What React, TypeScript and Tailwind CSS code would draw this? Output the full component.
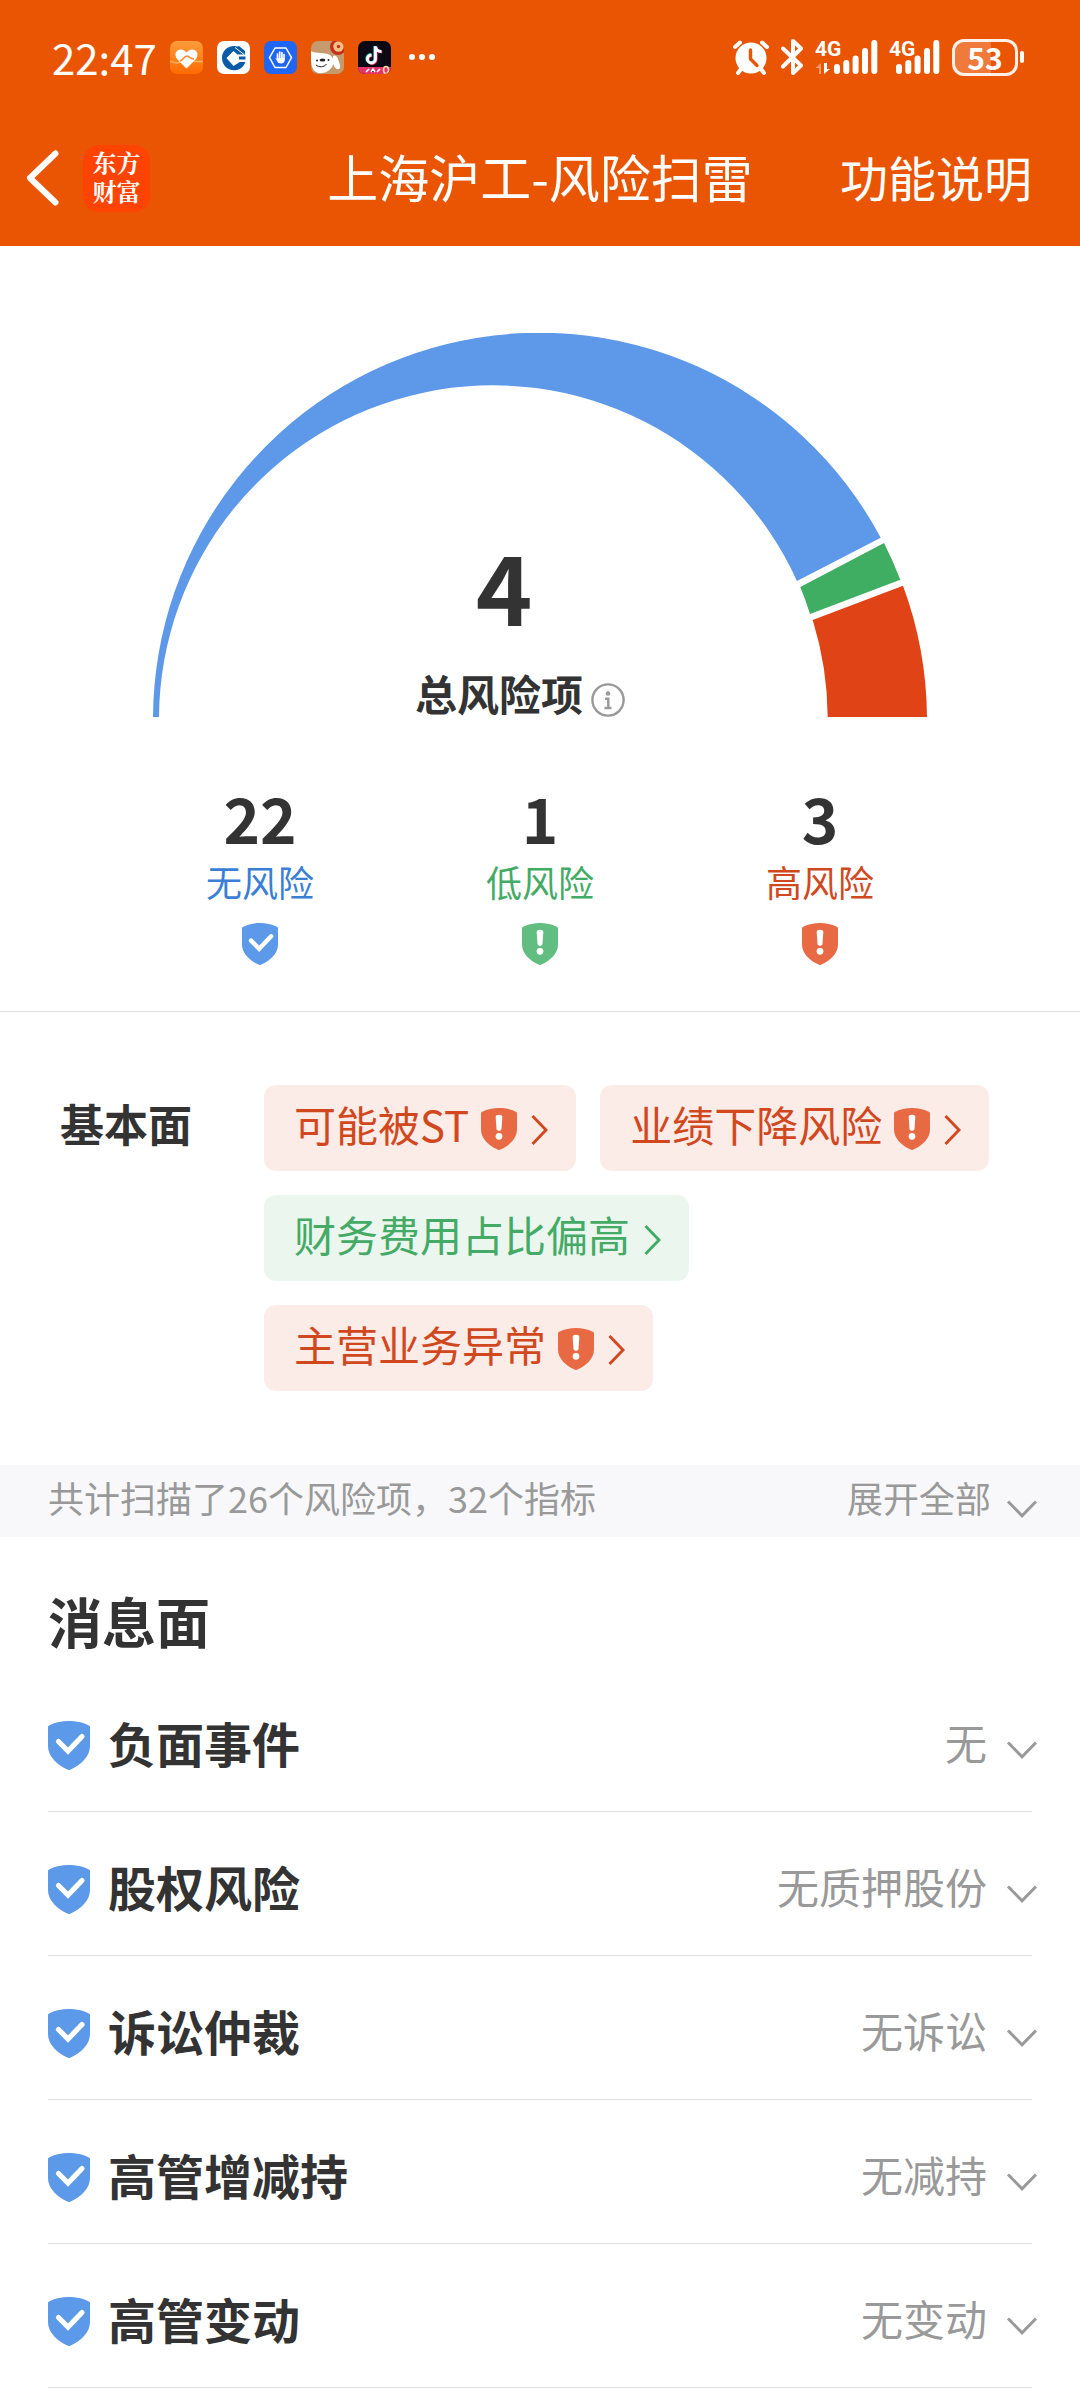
import React, { useState } from 'react';

type Level = 'none' | 'low' | 'high';

const FONT = "font-['Noto_Sans_CJK_SC','Noto_Sans',sans-serif]";

const SHIELD_FILL: Record<Level, string> = {
  none: 'fill-[#5c99e8]',
  low: 'fill-[#62bd80]',
  high: 'fill-[#e86a45]',
};

const Shield: React.FC<{ level: Level; className?: string }> = ({ level, className = '' }) => (
  <svg viewBox="0 0 42 49" className={`shrink-0 ${className}`} aria-hidden="true">
    <path
      className={SHIELD_FILL[level]}
      d="M1.500 4.300C13-1.300 29-1.300 40.500 4.300 41.700 4.900 42 5.200 42 6.500V25c0 10-8.500 18.500-18.800 23.200-1.600.9-2.800.9-4.400 0C8.500 43.500 0 35 0 25V6.500c0-1.300.3-1.600 1.500-2.200Z"
    />
    {level === 'none' ? (
      <path
        d="M10.500 20.500 20 30 34 15.500"
        fill="none"
        stroke="#fff"
        strokeWidth="5.200"
        strokeLinecap="round"
        strokeLinejoin="miter"
      />
    ) : (
      <g fill="#fff">
        <path d="M17.100 10.500c0-3.400 7.800-3.400 7.800 0l-1 14c-.2 2.800-5.600 2.800-5.800 0Z" />
        <circle cx="21" cy="33" r="3.900" />
      </g>
    )}
  </svg>
);

const ChevronRight: React.FC = () => (
  <svg viewBox="0 0 17 30" className="h-[30px] w-[17px] shrink-0" fill="none" aria-hidden="true">
    <path d="M1.500 1 15 15 1.500 29" stroke="currentColor" strokeWidth="2.900" />
  </svg>
);

const ChevronDown: React.FC<{ className?: string }> = ({ className = '' }) => (
  <svg viewBox="0 0 30 18" className={`h-[18px] w-[30px] shrink-0 ${className}`} fill="none" aria-hidden="true">
    <path d="M1 1.500 15 15.800 29 1.500" stroke="currentColor" strokeWidth="3" />
  </svg>
);

/* ---------- Status bar ---------- */

const AppIcons: React.FC = () => (
  <div className="ml-[13px] flex items-center gap-3.5" aria-hidden="true">
    <svg viewBox="0 0 33 33" className="size-[33px]">
      <defs>
        <linearGradient id="health-bg" x1="0" y1="0" x2="0" y2="1">
          <stop offset="0" stopColor="#ff9c3c" />
          <stop offset="1" stopColor="#ff6a00" />
        </linearGradient>
      </defs>
      <rect width="33" height="33" rx="7" fill="url(#health-bg)" />
      <path d="M0 20.500c4 0 4 1.500 7 1.500 4 0 5-5 9.500-5s5 3.500 8 3.500H33" stroke="#ffb45e" strokeWidth="1.500" fill="none" />
      <path d="M16.500 27.500 7.500 18.500C3.500 14 6 8.500 10.500 8.500c3 0 5 1.500 6 3 1-1.500 3-3 6-3 4.500 0 7 5.500 3 10Z" fill="#fff" />
      <path d="M10 20c3-1 4-5 7-5 2 0 3 3 7 3" stroke="#ff8a24" strokeWidth="1.600" fill="none" />
    </svg>
    <svg viewBox="0 0 33 33" className="size-[33px]">
      <rect width="33" height="33" rx="7" fill="#fff" />
      <path
        d="M18 5C10.500 4.500 5 10 5 17s5.500 12.300 12 12.300c5.500 0 10-3.500 11.300-8.300h-5.500L16.500 25 9.500 17l7-7 4 3.500h8L21 6Z"
        fill="#0b5ba8"
      />
      <path d="m16.500 10.800 6.200 6.200-6.200 6.500-6.200-6.500Z" fill="#fff" />
      <path d="m22 5 6 5v3L19 6Z" fill="#0b5ba8" />
      <path d="m18 6.500 9 7" stroke="#fff" strokeWidth="1" />
      <path d="M22 17h6.500" stroke="#0b5ba8" strokeWidth="3" />
    </svg>
    <svg viewBox="0 0 33 33" className="size-[33px]">
      <rect width="33" height="33" rx="7" fill="#1f66f5" />
      <path d="M11 7h11l5.500 9.700L22 26.500H11L5.500 16.700Z" fill="none" stroke="#fff" strokeWidth="1.500" strokeLinejoin="round" />
      <path
        d="M13.500 18v-5M15.700 17v-6M17.900 17v-5.500M20 18v-4.500"
        stroke="#fff"
        strokeWidth="1.700"
        strokeLinecap="round"
      />
      <path d="M11 16.500l3 5c.8 1.200 4.800 1.200 5.800 0 .8-1 1-2.500 1-4.500h-7.500v1.500Z" fill="#fff" />
    </svg>
    <svg viewBox="0 0 33 33" className="size-[33px]">
      <defs>
        <clipPath id="dog-clip">
          <rect width="33" height="33" rx="7" />
        </clipPath>
      </defs>
      <g clipPath="url(#dog-clip)">
        <rect width="33" height="33" fill="#c79a6e" />
        <circle cx="27" cy="6" r="8" fill="#c5301e" />
        <circle cx="27.500" cy="5.500" r="5.200" fill="#f5c183" />
        <circle cx="27.500" cy="5.500" r="1.700" fill="#c5301e" />
        <path d="M0 10c5 3 14 1 19 4 3 2 5 7 2 12-3 5-11 8-16 5-4-2-5-9-5-13Z" fill="#fff" />
        <path d="M22 15c3-2 5 2 6 6 1 3 2 6 0 7-3 1-6-3-6-7Z" fill="#fff" />
        <ellipse cx="11.500" cy="19" rx="2.900" ry="1.500" fill="#222" />
        <circle cx="6" cy="19.500" r="1" fill="#222" />
        <circle cx="17.500" cy="19" r="1" fill="#222" />
        <path d="M5 24c3 2.500 8 2.500 10.500-1" stroke="#222" strokeWidth="1" fill="none" />
        <path d="M0 31c3 .5 5 1.500 6 2H0Z" fill="#d05b3c" />
      </g>
    </svg>
    <svg viewBox="0 0 33 33" className="size-[33px]">
      <defs>
        <clipPath id="note-clip">
          <rect width="33" height="33" rx="7" />
        </clipPath>
      </defs>
      <g clipPath="url(#note-clip)">
        <rect width="33" height="33" fill="#0b0914" />
        <g fill="none" strokeWidth="2.800">
          <path d="M16.800 5v12.500a4 4 0 1 1-4-4M16.800 5c.5 3 2.700 5 6 5.200" stroke="#27e8e8" />
          <path d="M18.200 6v12.500a4 4 0 1 1-4-4M18.200 6c.5 3 2.700 5 6 5.200" stroke="#fb2b5b" />
          <path d="M17.500 5.500V18a4 4 0 1 1-4-4M17.500 5.500c.5 3 2.700 5 6 5.200" stroke="#fff" />
        </g>
        <path d="M0 26h33v7H0Z" fill="#e8326c" />
        <path d="M8 31l3-3M13 31l2-3 2 3M19 31l3-3" stroke="#fff" strokeWidth="1.600" />
        <ellipse cx="28" cy="29" rx="2.500" ry="3.500" fill="none" stroke="#ffd7a8" strokeWidth="1.600" />
      </g>
    </svg>
  </div>
);

const Signal: React.FC<{ data?: boolean }> = ({ data = false }) => (
  <svg
    viewBox={data ? '0 -8 63 52' : '0 -8 51 52'}
    className={data ? 'h-[52px] w-[63px]' : 'h-[52px] w-[51px]'}
    aria-label="4G"
  >
    <text x="0" y="17" fontSize="21" fontWeight="700" fill="#fff" fontFamily="Roboto, sans-serif">
      4G
    </text>
    {data && (
      <g>
        <path d="M4 35v-6H.500L6 24v11Z" fill="#f79a6a" />
        <path d="M9 24v11l6-5h-3v-6Z" fill="#fff" />
      </g>
    )}
    <g transform={data ? 'translate(19 0)' : 'translate(7 0)'} fill="#fff">
      <rect x="0" y="25" width="6" height="10" rx="3" />
      <rect x="9.300" y="21" width="6" height="14" rx="3" />
      <rect x="18.600" y="16.500" width="6" height="18.500" rx="3" />
      <rect x="28" y="9" width="6" height="26" rx="3" />
      <rect x="37.300" y="1" width="6" height="34" rx="3" />
    </g>
  </svg>
);

const StatusBar: React.FC = () => (
  <div className="flex h-[114px] items-center pr-14 pl-[52px]">
    <span className="text-[42px] leading-[48px]">22:47</span>
    <AppIcons />
    <svg viewBox="0 0 26 6" className="ml-[18px] h-1.5 w-[26px]" fill="#fff" aria-hidden="true">
      <circle cx="3" cy="3" r="3" />
      <circle cx="13" cy="3" r="3" />
      <circle cx="23" cy="3" r="3" />
    </svg>

    <div className="ml-auto flex items-center">
      <svg viewBox="0 0 36 36" className="size-9" aria-hidden="true">
        <circle cx="18" cy="19" r="15.500" fill="#fff" />
        <path d="M2 8 7 3.500M34 8l-5-4.500M8 30l-3 4M28 30l3 4" stroke="#fff" strokeWidth="4" strokeLinecap="round" />
        <path d="M17.500 11v9l6.500 6.500" stroke="#e95503" strokeWidth="3.400" strokeLinecap="round" strokeLinejoin="round" fill="none" />
      </svg>
      <svg viewBox="0 0 22 36" className="ml-3 h-9 w-[22px]" aria-hidden="true">
        <path
          d="M2 9.500 20 26.500 12 34V2l8 7.500L2 27.500"
          fill="none"
          stroke="#fff"
          strokeWidth="4"
          strokeLinecap="round"
          strokeLinejoin="round"
        />
      </svg>
      <div className="ml-3 flex gap-[11px]">
        <Signal data />
        <Signal />
      </div>
      <div className="ml-3 flex items-center gap-0.5">
        <div className="flex h-[37px] w-[66px] items-center justify-center rounded-xl border-[3px] border-white/90 bg-linear-to-r from-[#ef7a3c] from-60% to-transparent to-60%">
          <span className="text-[30px] leading-8 font-bold">53</span>
        </div>
        <div className="h-3 w-1 rounded-sm bg-white" />
      </div>
    </div>
  </div>
);

const NavBar: React.FC = () => (
  <nav className="grid h-32 grid-cols-[1fr_auto_1fr] items-center px-12">
    <div className="-ml-[22px] flex items-center gap-6">
      <button type="button" aria-label="返回">
        <svg viewBox="0 0 33 56" className="h-14 w-[33px]" fill="none" aria-hidden="true">
          <path d="M29.500 3.500 4 28l25.500 24.500" stroke="#fff" strokeWidth="6" strokeLinecap="round" strokeLinejoin="round" />
        </svg>
      </button>
      <a
        href="#home"
        className="flex size-[67px] items-center justify-center rounded-2xl bg-[#ff4401] pb-1 text-center font-['Noto_Serif_CJK_SC','Noto_Sans_CJK_SC',serif] text-2xl leading-[29px] font-bold"
      >
        东方
        <br />
        财富
      </a>
    </div>
    <h1 className="pb-1 text-[51px] leading-[60px]">上海沪工-风险扫雷</h1>
    <button type="button" className="justify-self-end pb-1 text-5xl leading-[60px]">
      功能说明
    </button>
  </nav>
);

/* ---------- Gauge and counters ---------- */

const Gauge: React.FC = () => (
  <div className="relative mx-auto w-full max-w-[774px]">
    <svg viewBox="0 0 774 384" className="block w-full" aria-hidden="true">
      <path d="M0 384A386.500 386.500 0 0 1 727.700 204.700L644 248A334 334 0 0 0 6 384Z" fill="#5d99e8" />
      <path d="M731 210A387 387 0 0 1 747.300 246.700L657 281A334.500 334.500 0 0 0 647.300 254Z" fill="#3fae62" />
      <path d="M750 252.700A387 387 0 0 1 774 384H674.700A334.500 334.500 0 0 0 659.700 287Z" fill="#e04315" />
    </svg>
    <div className="absolute inset-x-0 bottom-0">
      <p className="mb-9 pr-[72px] text-center text-8xl leading-none font-bold">4</p>
      <div className="flex items-end justify-center gap-2 pr-10">
        <h2 className="text-[42px] leading-[48px] font-bold">总风险项</h2>
        <button type="button" aria-label="总风险项说明">
          <svg viewBox="0 0 34 34" className="block size-[34px]" fill="none" aria-hidden="true">
            <circle cx="17" cy="17" r="15.600" stroke="#999" strokeWidth="2.400" />
            <circle cx="17" cy="10.500" r="2.300" fill="#999" />
            <path d="M14 15.700h3.300v9M13.500 25h7" stroke="#999" strokeWidth="2.400" />
          </svg>
        </button>
      </div>
    </div>
  </div>
);

const COUNTERS: { level: Level; count: number; label: string; color: string }[] = [
  { level: 'none', count: 22, label: '无风险', color: 'text-[#3a7fd5]' },
  { level: 'low', count: 1, label: '低风险', color: 'text-[#44ab66]' },
  { level: 'high', count: 3, label: '高风险', color: 'text-[#d2481e]' },
];

const Counters: React.FC = () => (
  <ul className="grid grid-cols-3 px-[120px] pt-[68px] pb-[46px]">
    {COUNTERS.map((c) => (
      <li key={c.level} className="flex flex-col items-center">
        <span className="text-[62px] leading-[64px] font-bold">{c.count}</span>
        <span className={`mt-3 text-4xl leading-10 ${c.color}`}>{c.label}</span>
        <Shield level={c.level} className="mt-[22px] h-[42px] w-9" />
      </li>
    ))}
  </ul>
);

/* ---------- Fundamentals ---------- */

const TAGS: { label: string; level: Level }[] = [
  { label: '可能被ST', level: 'high' },
  { label: '业绩下降风险', level: 'high' },
  { label: '财务费用占比偏高', level: 'low' },
  { label: '主营业务异常', level: 'high' },
];

const Fundamentals: React.FC = () => (
  <section className="flex pt-[73px] pr-12 pb-[74px] pl-[60px]">
    <h2 className="w-[204px] shrink-0 text-[44px] leading-[76px] font-bold">基本面</h2>
    <div className="flex flex-wrap gap-6">
      {TAGS.map((tag) => (
        <button
          key={tag.label}
          type="button"
          className={`flex h-[86px] items-center rounded-xl pr-7 pl-[30px] ${
            tag.level === 'high' ? 'bg-[#fbece7] text-[#d2481e]' : 'bg-[#ebf6ee] text-[#44ab66]'
          }`}
        >
          <span className="pb-2 text-[42px] leading-[60px]">{tag.label}</span>
          {tag.level === 'high' && <Shield level="high" className="mt-0.5 ml-3 h-[42px] w-9" />}
          <span className="mt-1 ml-3.5">
            <ChevronRight />
          </span>
        </button>
      ))}
    </div>
  </section>
);

/* ---------- News list ---------- */

const NEWS_ITEMS = [
  { title: '负面事件', value: '无' },
  { title: '股权风险', value: '无质押股份' },
  { title: '诉讼仲裁', value: '无诉讼' },
  { title: '高管增减持', value: '无减持' },
  { title: '高管变动', value: '无变动' },
];

const NewsList: React.FC = () => {
  const [openItem, setOpenItem] = useState<string | null>(null);

  return (
    <section className="px-12 pt-[52px]">
      <h2 className="pb-[15px] text-[54px] leading-[64px] font-bold">消息面</h2>
      <ul>
        {NEWS_ITEMS.map((item) => (
          <li key={item.title} className="border-b border-[#e3e3e3]">
            <button
              type="button"
              aria-expanded={openItem === item.title}
              onClick={() => setOpenItem(openItem === item.title ? null : item.title)}
              className="flex h-[143px] w-full items-center pt-1 text-left"
            >
              <Shield level="none" className="mt-2 h-[49px] w-[42px]" />
              <span className="ml-[18px] text-5xl leading-[60px] font-bold">{item.title}</span>
              <span className="ml-auto text-[42px] leading-[60px] text-[#999]">{item.value}</span>
              <ChevronDown className="mt-4 -mr-[5px] ml-5 text-[#999]" />
            </button>
          </li>
        ))}
      </ul>
    </section>
  );
};

export default function App() {
  return (
    <div className={`min-h-screen bg-white text-[#333] ${FONT}`}>
      <header className="bg-[#e95503] pb-1 text-white">
        <StatusBar />
        <NavBar />
      </header>

      <main>
        <section className="border-b border-[#e3e3e3] pt-[87px]">
          <Gauge />
          <Counters />
        </section>

        <Fundamentals />

        <div className="flex h-[72px] items-center justify-between bg-[#f8f8fa] pr-[43px] pb-2 pl-12 text-4xl leading-[48px] text-[#999]">
          <p>共计扫描了26个风险项，32个指标</p>
          <button type="button" className="flex items-center gap-4">
            展开全部
            <ChevronDown className="mt-6" />
          </button>
        </div>

        <NewsList />
      </main>
    </div>
  );
}
